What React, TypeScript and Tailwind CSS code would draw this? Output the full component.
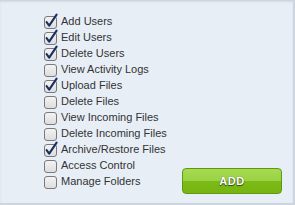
import React from "react";

const PERMS: { label: string; checked: boolean }[] = [
  { label: "Add Users", checked: true },
  { label: "Edit Users", checked: true },
  { label: "Delete Users", checked: true },
  { label: "View Activity Logs", checked: false },
  { label: "Upload Files", checked: true },
  { label: "Delete Files", checked: false },
  { label: "View Incoming Files", checked: false },
  { label: "Delete Incoming Files", checked: false },
  { label: "Archive/Restore Files", checked: true },
  { label: "Access Control", checked: false },
  { label: "Manage Folders", checked: false },
];

function Box({ checked }: { checked: boolean }) {
  return (
    <svg width="14" height="15" viewBox="0 0 14 15" className="shrink-0 overflow-visible">
      <defs>
        <linearGradient id="cbg" x1="0" y1="0" x2="0" y2="1">
          <stop offset="0" stopColor="#f4f4f4" />
          <stop offset="1" stopColor="#dcdcdc" />
        </linearGradient>
      </defs>
      <rect x="0.5" y="2.5" width="12" height="12" rx="2.5" fill="url(#cbg)" stroke="#7a7a7a" />
      {checked && (
        <path
          d="M2.6 8.2 L5.2 11.6 L12.6 0.6"
          fill="none"
          stroke="#1b2f63"
          strokeWidth="2.1"
          strokeLinecap="round"
          strokeLinejoin="round"
        />
      )}
    </svg>
  );
}

export default function App() {
  return (
    <div className="w-[295px] h-[205px] bg-[#e8eef6] border-t border-r-2 border-b-2 border-[#cdd5df] shadow-[inset_0_1px_2px_rgba(0,0,0,0.08)] flex justify-between items-end font-['Liberation_Sans',Arial,sans-serif]">
      <ul className="pl-[44px] pt-[12px] pb-[14px] self-start">
        {PERMS.map((p) => (
          <li key={p.label} className="flex items-center gap-[2px] h-[16px] text-[11px] text-[#333] leading-none">
            <Box checked={p.checked} />
            <span className="ml-[1px]">{p.label}</span>
          </li>
        ))}
      </ul>
      <button className="mr-[11px] mb-[9px] w-[100px] h-[26px] rounded-[4px] border border-[#5e9a0e] bg-[linear-gradient(#a6da52_0%,#9bd245_48%,#7cbb16_52%,#76b512_100%)] text-white text-[11px] font-bold tracking-[0.5px] [text-shadow:0_1px_1px_rgba(0,0,0,0.6),0_0_1px_rgba(0,0,0,0.5)] font-['Liberation_Sans',Arial,sans-serif]">
        ADD
      </button>
    </div>
  );
}
